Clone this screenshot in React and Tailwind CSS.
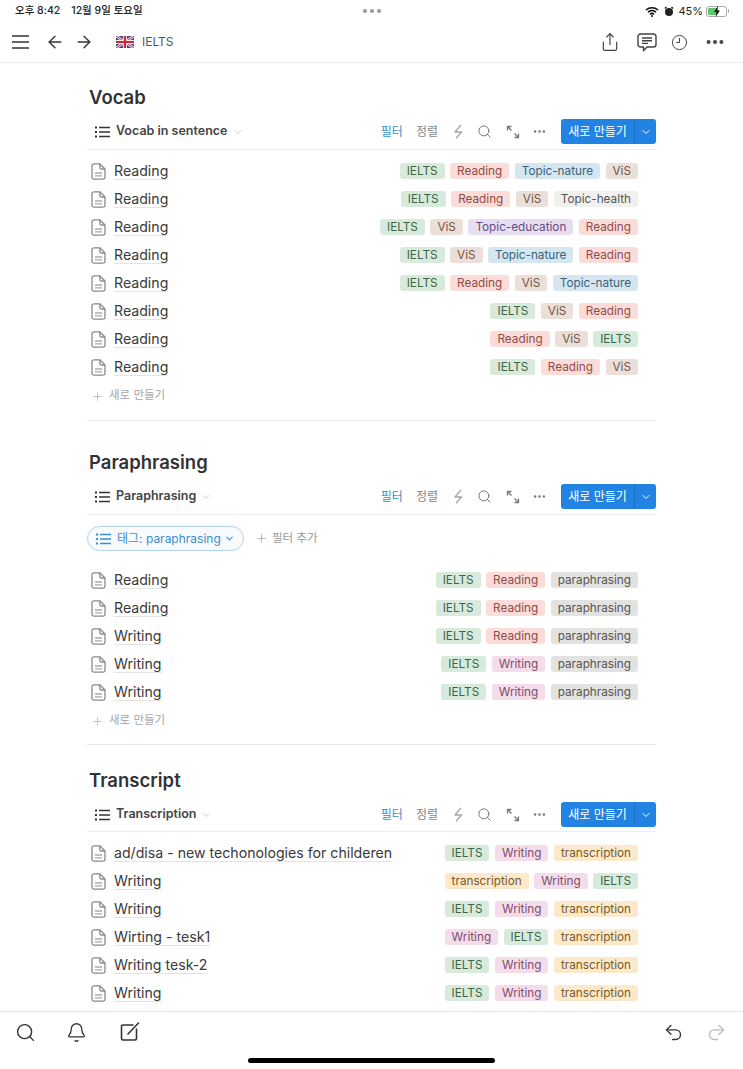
import { ChevronDown, Search, Ellipsis, Plus, Bell, Share, Undo2, Redo2, ArrowLeft, ArrowRight, Clock9 } from "lucide-react";

const tagStyles = {
  IELTS: "bg-[#d8eadb] text-[#3c6548]",
  Reading: "bg-[#fbdcd9] text-[#8f4c47]",
  Writing: "bg-[#f5dcea] text-[#79506b]",
  ViS: "bg-[#ecdfd9] text-[#735649]",
  "Topic-nature": "bg-[#d5e6f0] text-[#3a6378]",
  "Topic-health": "bg-[#f0f0ee] text-[#555553]",
  "Topic-education": "bg-[#e8def2] text-[#644c82]",
  paraphrasing: "bg-[#e2e2e0] text-[#555553]",
  transcription: "bg-[#fde8c9] text-[#755a2e]",
};

const sections = [
  {
    title: "Vocab",
    view: "Vocab in sentence",
    box: "mt-0",
    foot: "mb-[11px]",
    bar: "h-[34px]",
    rows: [
      ["Reading", ["IELTS", "Reading", "Topic-nature", "ViS"]],
      ["Reading", ["IELTS", "Reading", "ViS", "Topic-health"]],
      ["Reading", ["IELTS", "ViS", "Topic-education", "Reading"]],
      ["Reading", ["IELTS", "ViS", "Topic-nature", "Reading"]],
      ["Reading", ["IELTS", "Reading", "ViS", "Topic-nature"]],
      ["Reading", ["IELTS", "ViS", "Reading"]],
      ["Reading", ["Reading", "ViS", "IELTS"]],
      ["Reading", ["IELTS", "Reading", "ViS"]],
    ],
  },
  {
    title: "Paraphrasing",
    view: "Paraphrasing",
    filter: true,
    box: "mt-[24px]",
    foot: "mb-[10px]",
    bar: "h-[34px]",
    rows: [
      ["Reading", ["IELTS", "Reading", "paraphrasing"]],
      ["Reading", ["IELTS", "Reading", "paraphrasing"]],
      ["Writing", ["IELTS", "Reading", "paraphrasing"]],
      ["Writing", ["IELTS", "Writing", "paraphrasing"]],
      ["Writing", ["IELTS", "Writing", "paraphrasing"]],
    ],
  },
  {
    title: "Transcript",
    view: "Transcription",
    box: "mt-[18px]",
    bar: "h-[33px]",
    rows: [
      ["ad/disa - new techonologies for childeren", ["IELTS", "Writing", "transcription"]],
      ["Writing", ["transcription", "Writing", "IELTS"]],
      ["Writing", ["IELTS", "Writing", "transcription"]],
      ["Wirting - tesk1", ["Writing", "IELTS", "transcription"]],
      ["Writing tesk-2", ["IELTS", "Writing", "transcription"]],
      ["Writing", ["IELTS", "Writing", "transcription"]],
    ],
  },
];

function UkFlag() {
  return (
    <svg width="18" height="12" viewBox="0 0 18 12" className="rounded-[1px]">
      <rect width="18" height="12" fill="#3a4a8c" />
      <path d="M0 0 18 12M18 0 0 12" stroke="#eee" strokeWidth="2.6" />
      <path d="M0 0 18 12M18 0 0 12" stroke="#c8283c" strokeWidth="1" />
      <path d="M9 0v12M0 6h18" stroke="#eee" strokeWidth="4" />
      <path d="M9 0v12M0 6h18" stroke="#c8283c" strokeWidth="2.2" />
    </svg>
  );
}

function ListIcon({ className }) {
  return (
    <svg width="15" height="12" viewBox="0 0 15 12" fill="none" stroke="currentColor" className={className}>
      <path d="M4 1.500h11M4 6h11M4 10.500h11" strokeWidth="1.400" />
      <path d="M0 1.500h2M0 6h2M0 10.500h2" strokeWidth="1.800" />
    </svg>
  );
}

function DocIcon() {
  return (
    <svg width="15" height="17" viewBox="0 0 15 17" fill="none" stroke="#8a8a8a" strokeWidth="1.300" strokeLinejoin="round">
      <path d="M3 .8h5.800L14 6v8.200a2 2 0 0 1-2 2H3a2 2 0 0 1-2-2V2.800a2 2 0 0 1 2-2z" />
      <path d="M8.800.8V4.500A1.500 1.500 0 0 0 10.300 6H14" />
      <path d="M4 10h7M4 12.800h7" stroke="#aaa" />
    </svg>
  );
}

function BoltIcon() {
  return (
    <svg width="11" height="15" viewBox="0 0 11 15" fill="none" stroke="#a5a5a5" strokeWidth="1.300" strokeLinejoin="round" className="ml-[15px]">
      <path d="M8 .8 2 8h6.500L3 14.200" />
    </svg>
  );
}

function ExpandIcon() {
  return (
    <svg width="14" height="14" viewBox="0 0 14 14" fill="none" stroke="#777" strokeWidth="1.300" className="ml-[14px]">
      <path d="M1.500 5.500v-4h4M1.500 1.500l4 4M12.500 8.500v4h-4M12.500 12.500l-4-4" />
    </svg>
  );
}

function ChatIcon() {
  return (
    <svg width="20" height="19" viewBox="0 0 20 19" fill="none" stroke="#444" strokeWidth="1.400" strokeLinejoin="round" className="ml-[17px]">
      <path d="M3.500 1h13A2.500 2.500 0 0 1 19 3.500v8a2.500 2.500 0 0 1-2.500 2.500H10l-3.500 3.800V14h-3A2.500 2.500 0 0 1 1 11.500v-8A2.500 2.500 0 0 1 3.500 1z" />
      <path d="M5 5h10M5 7.700h10M5 10.400h6" />
    </svg>
  );
}

function ComposeIcon() {
  return (
    <svg width="20" height="20" viewBox="0 0 20 20" fill="none" stroke="#333" strokeWidth="1.600" strokeLinecap="round" className="ml-[33px]">
      <path d="M13 3H3a1.500 1.500 0 0 0-1.500 1.500v12A1.500 1.500 0 0 0 3 18h12a1.500 1.500 0 0 0 1.500-1.500V7" />
      <path d="M8 12 18.500 1" />
    </svg>
  );
}

function StatusBar() {
  return (
    <div className="flex h-[22px] items-center justify-between pl-[15px] pr-[14px] text-[11px] text-[#222]">
      <div className="flex w-[200px] gap-[11px] text-[10.500px] font-medium">
        <span>오후 8:42</span>
        <span>12월 9일 토요일</span>
      </div>
      <div className="flex gap-[3px]">
        <span className="h-[4px] w-[4px] rounded-full bg-[#999]" />
        <span className="h-[4px] w-[4px] rounded-full bg-[#999]" />
        <span className="h-[4px] w-[4px] rounded-full bg-[#999]" />
      </div>
      <div className="flex w-[200px] items-center justify-end gap-[3px]">
        <svg width="14" height="11" viewBox="0 0 14 11">
          <path d="M1 4a9 9 0 0 1 12 0M3 6.200a6 6 0 0 1 8 0M5 8.300a3 3 0 0 1 4 0" fill="none" stroke="#111" strokeWidth="1.600" />
          <circle cx="7" cy="10" r="1" fill="#111" />
        </svg>
        <svg width="10" height="11" viewBox="0 0 10 11" className="ml-[2px]">
          <circle cx="5" cy="6" r="4" fill="#222" />
          <path d="M1 2.500 2.500 1M9 2.500 7.500 1" stroke="#222" strokeWidth="1.500" />
        </svg>
        <span className="ml-[1px]">45%</span>
        <div className="relative flex h-[11px] w-[21px] items-center rounded-[3px] border border-[#aaa] p-[1px]">
          <div className="h-full w-[9px] rounded-[1px] bg-[#5fc76c]" />
          <svg width="8" height="11" viewBox="0 0 8 11" className="absolute left-[6px] top-[-1px]">
            <path d="M5 0 1 6h2.500L2.500 11 7 4.500H4.500z" fill="#111" />
          </svg>
        </div>
        <div className="ml-[-2px] h-[4px] w-[1px] rounded-r-full bg-[#aaa]" />
      </div>
    </div>
  );
}

function TopBar() {
  return (
    <div className="flex h-[41px] items-center justify-between border-b border-[#ececec] pl-[12px] pr-[17px]">
      <div className="flex items-center text-[#333]">
        <svg width="17" height="14" viewBox="0 0 17 14" stroke="currentColor" strokeWidth="1.700">
          <path d="M0 1h17M0 7h17M0 13h17" />
        </svg>
        <ArrowLeft size={20} strokeWidth={1.6} className="ml-[16px]" />
        <ArrowRight size={20} strokeWidth={1.6} className="ml-[9px]" />
        <div className="ml-[22px] flex items-center gap-[8px]">
          <UkFlag />
          <span className="text-[12px] text-[#555]">IELTS</span>
        </div>
      </div>
      <div className="flex items-center text-[#444]">
        <Share size={20} strokeWidth={1.4} />
        <ChatIcon />
        <Clock9 size={17} strokeWidth={1.4} className="ml-[14px]" />
        <Ellipsis size={22} strokeWidth={2.4} className="ml-[16px]" />
      </div>
    </div>
  );
}

function Tag({ name }) {
  return (
    <span className={`flex h-[16px] items-center rounded-[3px] px-[7px] pt-[1px] text-[11.750px] leading-none ${tagStyles[name]}`}>
      {name}
    </span>
  );
}

function Row({ title, tags }) {
  return (
    <div className="flex h-[28px] items-center justify-between pl-[4px] pr-[18px]">
      <div className="flex items-center gap-[8px]">
        <DocIcon />
        <span className="border-b border-[#e4e4e4] text-[14.150px] leading-[17px] text-[#3a3a3a]">{title}</span>
      </div>
      <div className="flex gap-[5.500px]">
        {tags.map((t, i) => (
          <Tag key={i} name={t} />
        ))}
      </div>
    </div>
  );
}

function Toolbar({ view, bar }) {
  return (
    <div className={`flex items-start justify-between border-b border-[#eeeeee] pl-[8px] pt-[3px] ${bar}`}>
      <div className="flex h-[25px] items-center">
        <ListIcon className="text-[#333]" />
        <span className="ml-[6px] text-[12.500px] font-semibold text-[#444]">{view}</span>
        <ChevronDown size={12} strokeWidth={1.2} className="ml-[4px] text-[#aaa]" />
      </div>
      <div className="flex h-[25px] items-center">
        <span className="text-[12px] text-[#3b8ed0]">필터</span>
        <span className="ml-[13px] text-[12px] text-[#888]">정렬</span>
        <BoltIcon />
        <Search size={15} strokeWidth={1.6} className="ml-[13px] text-[#777]" />
        <ExpandIcon />
        <Ellipsis size={15} strokeWidth={2} className="ml-[12px] text-[#777]" />
        <div className="ml-[14px] flex h-[25px] w-[95px] items-center rounded-[3px] bg-[#2383e2] text-white">
          <span className="w-[73px] text-center text-[12px]">새로 만들기</span>
          <div className="flex h-full flex-1 items-center justify-center border-l border-[#1b6fc4]">
            <ChevronDown size={12} strokeWidth={2} />
          </div>
        </div>
      </div>
    </div>
  );
}

function Section({ section, last }) {
  return (
    <section className={`${section.box} ${last ? "" : "border-b border-[#e6e6e6]"}`}>
      <h2 className="flex h-[36px] items-center pl-[2px] text-[18.500px] font-semibold text-[#333]">{section.title}</h2>
      <Toolbar view={section.view} bar={section.bar} />
      {section.filter && (
        <div className="mt-[11px] flex items-center">
          <div className="flex h-[25px] w-[157px] items-center rounded-full border border-[#b5d3ec] bg-[#f7fbfe] pl-[8px] text-[#3b8ed0]">
            <ListIcon />
            <span className="ml-[6px] text-[12px]">태그: paraphrasing</span>
            <ChevronDown size={11} strokeWidth={2.4} className="ml-[3px]" />
          </div>
          <Plus size={13} strokeWidth={1.2} className="ml-[11px] text-[#999]" />
          <span className="ml-[4px] text-[11.500px] text-[#999]">필터 추가</span>
        </div>
      )}
      <div className={section.filter ? "mt-[15px]" : "mt-[7px]"}>
        {section.rows.map((r, i) => (
          <Row key={i} title={r[0]} tags={r[1]} />
        ))}
      </div>
      {!last && (
        <div className={`flex h-[28px] items-center gap-[5px] pl-[4px] pt-[2px] text-[#a5a5a5] ${section.foot}`}>
          <Plus size={13} strokeWidth={1.2} />
          <span className="text-[11.500px]">새로 만들기</span>
        </div>
      )}
    </section>
  );
}

function BottomBar() {
  return (
    <div className="relative h-[58px] border-t border-[#e4e4e4] bg-white">
      <div className="flex h-[40px] items-center justify-between pl-[15px] pr-[16px] text-[#333]">
        <div className="flex items-center">
          <Search size={21} strokeWidth={1.6} />
          <Bell size={21} strokeWidth={1.5} className="ml-[30px]" />
          <ComposeIcon />
        </div>
        <div className="flex items-center">
          <Undo2 size={21} strokeWidth={1.6} />
          <Redo2 size={21} strokeWidth={1.6} className="ml-[22px] text-[#bbb]" />
        </div>
      </div>
      <div className="absolute bottom-[6px] left-[248px] h-[5px] w-[247px] rounded-full bg-black" />
    </div>
  );
}

export default function App() {
  return (
    <div className="flex h-[1069px] flex-col overflow-hidden bg-white font-['Inter','Noto_Sans_CJK_KR',sans-serif]">
      <StatusBar />
      <TopBar />
      <main className="flex-1 overflow-hidden pl-[87px] pr-[87px] pt-[17px]">
        {sections.map((s, i) => (
          <Section key={s.title} section={s} last={i === sections.length - 1} />
        ))}
      </main>
      <BottomBar />
    </div>
  );
}
